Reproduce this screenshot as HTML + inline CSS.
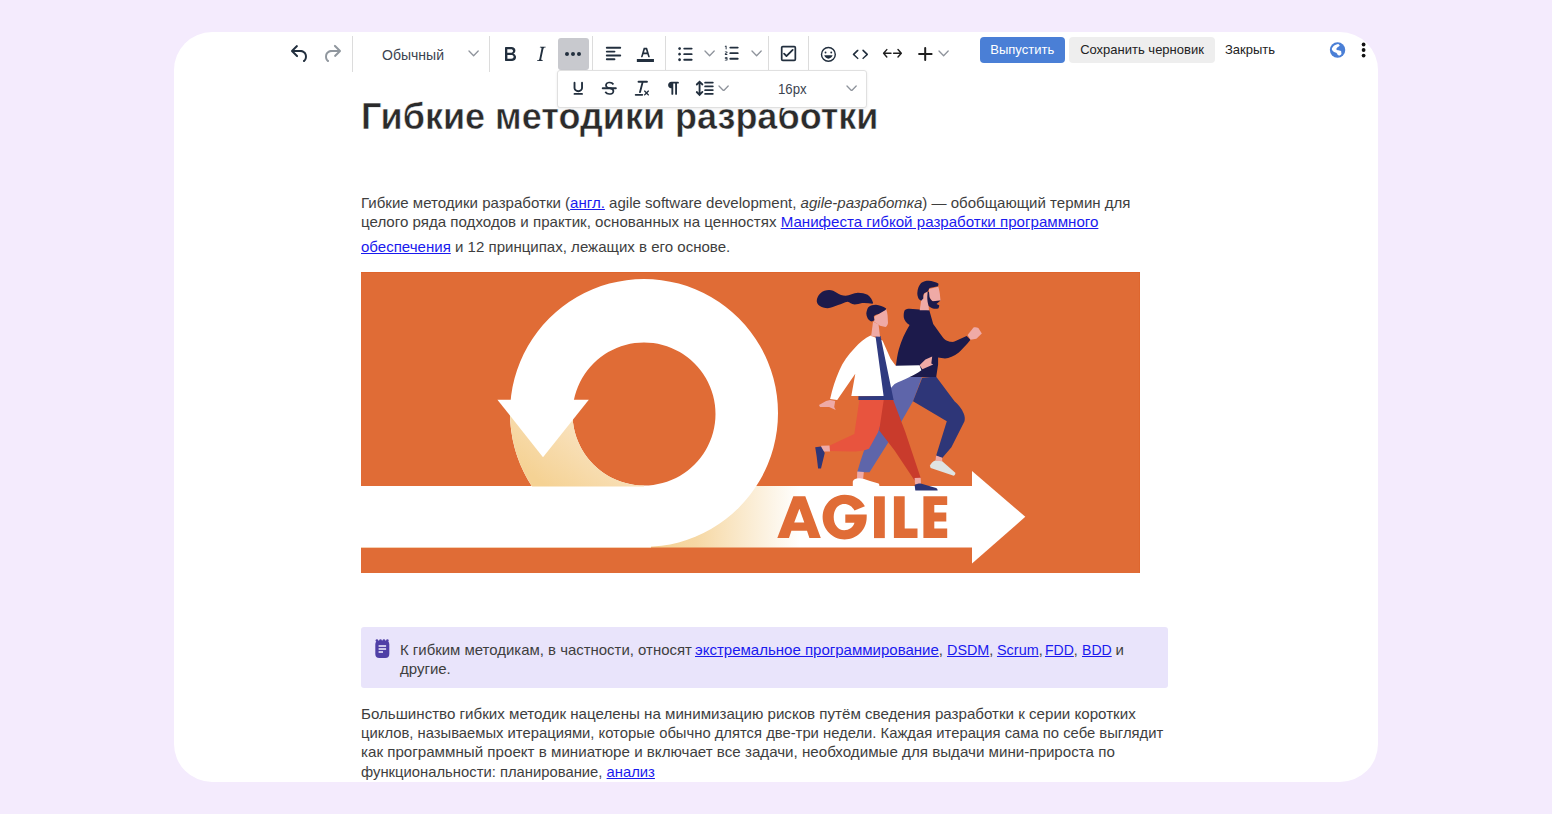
<!DOCTYPE html>
<html><head><meta charset="utf-8"><style>
html,body{margin:0;padding:0;width:1552px;height:814px;overflow:hidden;background:#f4ebfd;font-family:"Liberation Sans",sans-serif}
.card{position:absolute;left:174px;top:32px;width:1204px;height:750px;background:#fff;border-radius:38px;overflow:hidden}
.wrap{position:absolute;left:-174px;top:-32px;width:1552px;height:814px}
.ic{position:absolute;display:block}
.sep{position:absolute;top:36px;width:1px;height:36px;background:#dcdcdc}
.txt{position:absolute;font-size:15px;line-height:20px;white-space:nowrap}
.panel{position:absolute;left:557px;top:70px;width:308px;height:35.5px;background:#fff;border:1px solid #e0e0e0;border-radius:3px;box-shadow:0 1px 3px rgba(0,0,0,.08)}
.btn{position:absolute;top:37px;height:26px;border-radius:4px;font-size:13px;line-height:26px;text-align:center;white-space:nowrap}
.h1{position:absolute;font-size:36px;line-height:40px;font-weight:bold;color:#2b2b2b;white-space:nowrap;-webkit-text-stroke:0.5px #fff}
.ln{position:absolute;transform-origin:0 0;font-size:15px;line-height:20px;color:#3e3e3e;white-space:nowrap}
.ln a{color:#1a1aee;text-decoration:underline}
.note{position:absolute;left:361px;top:627px;width:806.5px;height:61px;background:#e9e4fb;border-radius:3px}
</style></head><body>
<div class="card"><div class="wrap">
<div class="h1" style="left:361px;top:96.7px">Гибкие методики разработки</div><div class="ln" style="left:361px;top:192.8px;transform:scaleX(1.0029)">Гибкие методики разработки (<a>англ.</a> agile software development, <i>agile-разработка</i>) — обобщающий термин для</div><div class="ln" style="left:361px;top:212.4px;transform:scaleX(1.0071)">целого ряда подходов и практик, основанных на ценностях <a>Манифеста гибкой разработки программного</a></div><div class="ln" style="left:361px;top:237.2px;transform:scaleX(1.003)"><a>обеспечения</a> и 12 принципах, лежащих в его основе.</div><svg id="art" style="position:absolute;left:361px;top:271.5px;width:779px;height:301px" viewBox="0 0 779 301"><defs>
<linearGradient id="bandg" gradientUnits="userSpaceOnUse" x1="640" y1="0" x2="800" y2="0">
<stop offset="0" stop-color="#f4cf90"/><stop offset="0.35" stop-color="#f6d8a4"/><stop offset="1" stop-color="#ffffff"/>
</linearGradient>
<linearGradient id="tailg" gradientUnits="userSpaceOnUse" x1="610" y1="400" x2="545" y2="485">
<stop offset="0" stop-color="#fbebd6"/><stop offset="1" stop-color="#f5d294"/>
</linearGradient>
<clipPath id="lowleft"><rect x="400" y="401" width="250" height="85"/></clipPath>
</defs>
<g transform="translate(-361,-271.5)">
<rect x="361" y="271.5" width="779" height="301" fill="#e06c36"/>
<rect x="361" y="271.5" width="779" height="1" fill="#dc5f26" opacity=".6"/><rect x="1139" y="271.5" width="1" height="301" fill="#dc5f26" opacity=".5"/>
<!-- band -->
<rect x="361" y="485.5" width="612" height="61.5" fill="url(#bandg)"/>
<rect x="361" y="485.5" width="290" height="61.5" fill="#fff"/>
<!-- ring white -->
<path fill="#fff" fill-rule="evenodd" d="M644 278.5a134 134 0 1 0 0.01 0Z M644 342a71.5 71.5 0 1 1 -0.01 0Z"/>
<!-- tail cream lower-left of ring -->
<path clip-path="url(#lowleft)" fill="url(#tailg)" fill-rule="evenodd" d="M644 278.5a134 134 0 0 0 -134 134 134 134 0 0 0 134 134 L644 485 a71.5 71.5 0 0 1 -71.5 -71.5 71.5 71.5 0 0 1 71.5 -71.5Z"/>
<!-- left arrowhead -->
<path fill="#fff" d="M497.4 399.2H588.8L543 456.7Z"/>
<!-- right arrowhead -->
<path fill="#fff" d="M972 470.5L1025.3 516.3L972 563Z"/>
<!-- AGILE -->
<g fill="#e06c36">
<path fill-rule="evenodd" d="M777.3 537.6L793.3 495.8H805.3L820.8 537.6H809.4L807 530.3H791.4L789 537.6Z M794.2 522H804.3L799.4 508.3Z"/>
<path d="M866.7 514.1H845.3V522.3H854.5C853 527 849 529.7 844.2 529.7C837.8 529.7 833.7 523.8 833.7 516.5C833.7 509.2 837.8 503.4 844.2 503.4C849 503.4 852.5 506.2 854.5 510L864.9 505.8C861.2 498.8 853.8 494.2 844.6 494.2C832.4 494.2 822.6 504.2 822.6 516.5C822.6 528.9 832.4 538.9 844.6 538.9C856.8 538.9 866.7 529.5 866.7 516.5Z"/>
<rect x="874" y="495.8" width="10.8" height="41.8"/>
<path d="M893.9 495.8H904.7V528.1H917.5V537.6H893.9Z"/>
<path d="M923.4 495.8H947.2V504.6H934.3V512H946.3V521.1H934.3V528.1H947.2V537.6H923.4Z"/>
</g>
<!-- PEOPLE -->
<!-- man back leg (light purple) -->
<path fill="#5e65aa" d="M884 386L886 376L922.2 376L913 400.7L900.7 422.2L869.5 471.8L857.2 471.8L860.2 461.5L864.6 448.2L877.9 429L885 410Z"/>
<!-- man front leg navy -->
<path fill="#2e3678" d="M922.2 377.2L936 376L954.5 400.7C958 404 962 408 963.7 413C965 416 965 418.5 964.5 420.7L951.4 446.8L942.2 457.6L936.1 455.3L946.8 420.7L913 400.7Z"/>
<!-- man back ankle + shoe -->
<path fill="#efaaa6" d="M857.2 471L863.8 471.5L863.1 479.2L857 479.2Z"/>
<path fill="#ffffff" d="M852.8 481C853.5 478.5 856 477.7 859 477.7C862 477.7 866 479 870 480.5L878.6 483C879.5 484 879.5 485.5 879.3 486.6H852.8Z"/>
<!-- man front ankle + shoe -->
<path fill="#efaaa6" d="M936.1 455L942.2 457.3L942.2 460.9L935.5 460Z"/>
<path fill="#dfe4e3" d="M929.9 465.3C931 462.5 933 460.5 935.3 459.9L942.2 460.7L955.3 472.2C955.6 473.5 954.8 474.8 953.7 475.3L930.7 467.6Z"/>
<!-- woman back leg light red -->
<path fill="#e8543e" d="M859.4 399L885.2 399L883.8 414.3L877.9 432L869 448.2C863 450.5 857 451.1 851.3 451.1L829.9 450.4L829.2 445.2L854.3 433.4L857.2 414.3Z"/>
<!-- woman back ankle + shoe -->
<path fill="#efaaa6" d="M821 445.2L829.5 445L830 451L822 451Z"/>
<path fill="#2e3678" d="M815.2 446.7L821 446L824.75 452.6L821 468.1L818.1 468.1L816.6 455.6Z"/>
<!-- woman front leg dark red -->
<path fill="#c93b2c" d="M883.8 399L893 399L905.3 431.5L920.7 477.6L914.6 479.9L894.6 449.9L879.2 430Z"/>
<!-- woman front ankle + shoe -->
<path fill="#efaaa6" d="M914.6 477.6L920.7 477.3L921 483.7L915 483.7Z"/>
<path fill="#2c3575" d="M914.6 484.5C915.5 483.5 918 482.9 920.7 482.9L936.1 487.5C937.2 488 937.6 489 937.6 489.9H915.3Z"/>
<!-- man torso hoodie -->
<path fill="#1c1a4b" d="M904.7 309.8C906 308.5 908 308.3 909.6 308.3L929.3 309.8L933.2 323.6L941.1 334.4C943 337 945 339.5 947 340.3C950 341.5 952 341.6 953.9 341.3L966.6 335.4L970.5 339.3C966 345 962 349 958.8 352C954 355.5 949 357.8 945 358L938.1 357L938.1 363.9L936.2 376.6L909.6 376.6L895.9 365.8C896.5 360 897.5 354 898.8 349.1C901.5 340 905 332 909.6 324.6C906.5 322.5 904 319.5 903.75 316.7C903.6 314 903.8 311.5 904.7 309.8Z"/>
<!-- man fist -->
<path fill="#efaaa6" d="M967.6 334.4L973.5 327C975 326.5 977 326.8 978.4 327.5L981.8 332.9L976.4 338.3L970.5 339.3Z"/>
<!-- man neck -->
<path fill="#efaaa6" d="M924.6 292.4L927.7 291L928.6 305.2L929 309.8L919.7 309.8L921.1 300.3L923.3 295.5Z"/>
<!-- man face -->
<path fill="#efaaa6" d="M929 288.4L938.3 286.2C939.3 289.5 940 293 940.1 296L940.5 299.9L932.1 300.8L929 296Z"/>
<!-- man hair -->
<path fill="#1c1a4b" d="M917.3 292.8C917.5 288.5 919 284.8 921.1 282.6C923.5 280.8 926 280.2 928.6 280.2C932 280.3 936 281.5 938.3 283.1C938.6 284 938.4 285 937.9 285.7L929.5 287.5L927.7 291L924.6 292.4C923.5 293.2 923.2 294.5 923.3 295.5L923.3 298.1L921.1 300.3C919.5 299.5 918.3 298.2 918 296.8C917.5 295.5 917.3 294 917.3 292.8Z"/>
<!-- man beard -->
<path fill="#1c1a4b" d="M927.7 291L929 291.5L929.5 296.8C930.5 298.8 931.5 300.2 933 300.8L940.5 299.9L936.5 303.4L939.2 304.8C939.2 306 938.9 307.2 938.3 307.9C936.8 308.4 935.3 308.4 933.9 308.3C931.5 307.5 929.8 306.5 928.6 305.2C927.5 302 927.2 298.5 927.3 295.9Z"/>
<!-- woman jacket -->
<path fill="#ffffff" d="M870.5 335L882.5 340L890.6 358.2L895.7 365.3L919.5 364.8L921.4 369.7C917 373 913 375 909.6 376.6C904 379.5 899 381.5 894.6 383.4L883.6 395.5L851.3 395.5L855.3 373.3L837.2 399.6L830.1 398.5C832.5 388 835.5 378.5 839.2 370.3C843 361.5 848.5 354 854.3 348.1C859.5 342 865 337.5 870.5 335Z"/>
<!-- woman strap + bag -->
<path fill="#2f3a80" d="M875.5 335.5L880.5 335.5L893.6 399.6L858.4 399.6L858.4 395.8L883.6 395.5Z"/>
<!-- woman hands -->
<path fill="#efaaa6" d="M919.5 364.8L925.4 359L932.2 356L931.3 362.9L933.2 363.9L922.4 368.8Z"/>
<path fill="#efaaa6" d="M830.1 399.6L835.2 400.6L834.2 406.6L835.7 409.6L829.1 406.6L820 406.6L819 404.6L826.1 400.6Z"/>
<!-- woman neck -->
<path fill="#efaaa6" d="M873.1 321L878.6 324L880 336.3L871.1 335.8Z"/>
<!-- woman face -->
<path fill="#efaaa6" d="M878.6 313.6L886.2 308.8C887 311 887.5 313 887.6 315L888 322.5C887.6 324.5 886.8 326 885.5 326.6L880 325.3L873.8 321L874.5 316Z"/>
<!-- woman hair -->
<path fill="#1c1a4b" d="M866.3 312.9C866.6 310.5 867.3 308.3 868.3 306.7C870.5 305 873 304.3 875.9 304.3C879.5 304.5 883 306 886.2 308.1L885.5 309.4L878.6 313.6L875.9 314.3C874.6 314.8 873.8 315.5 873.8 316.3L874.5 319.8L871.8 321.1C869.5 320.2 868.3 319 867.6 317.7C866.8 316 866.3 314.5 866.3 312.9Z"/>
<!-- ponytail -->
<path fill="#1c1a4b" d="M816.75 300.5C816.8 297.5 818.2 294.8 820.2 292.9C822.8 290.5 826 289.5 829.1 289.5C832 289.6 834.5 290.8 836.7 292.25C839.5 294 842.5 295.3 845.6 295.3C849.5 295 853.5 292.6 858 292.25C861.5 292.3 865 293 867.6 294.3C870.5 296.5 872.3 299.5 873.1 302.6L872.5 303.3C869 302.7 865.5 302.4 862.1 302.6C859.5 303.3 857 304 854.6 304C851.5 303.5 849.5 301.8 847.7 301.2C844.5 301.5 841.5 303.5 838.1 304.6C834.5 306 831 307.5 827.75 307.7C824.5 307.7 821.5 306.8 819.5 305.3C817.7 304 816.75 302.3 816.75 300.5Z"/>
</g>
</svg><div class="note"></div><svg class="ic" style="left:370px;top:634px;width:26px;height:28px" viewBox="370 634 26 28"><rect x="375.3" y="640.6" width="14" height="17.5" rx="4" fill="#4f3fa6"/><circle cx="376.9" cy="640.6" r="1.3" fill="#4f3fa6"/><circle cx="380.5" cy="640.6" r="1.3" fill="#4f3fa6"/><circle cx="383.9" cy="640.6" r="1.3" fill="#4f3fa6"/><circle cx="387.4" cy="640.6" r="1.3" fill="#4f3fa6"/><path d="M378.6 645.9H386.1M378.6 649H386.1M378.6 652H383" stroke="#f4f2ff" stroke-width="1.5"/></svg><div class="ln" style="left:400px;top:639.6px;transform:scaleX(0.996)">К гибким методикам, в частности, относят</div><div class="ln" style="left:694.6px;top:639.6px;transform:scaleX(1.001)"><a>экстремальное программирование</a>,</div><div class="ln" style="left:946.6px;top:639.6px;transform:scaleX(0.958)"><a>DSDM</a>,</div><div class="ln" style="left:996.8px;top:639.6px;transform:scaleX(0.962)"><a>Scrum</a>,</div><div class="ln" style="left:1045.4px;top:639.6px;transform:scaleX(0.936)"><a>FDD</a>,</div><div class="ln" style="left:1082.1px;top:639.6px;transform:scaleX(0.938)"><a>BDD</a></div><div class="ln" style="left:1115.6px;top:639.6px">и</div><div class="ln" style="left:400px;top:658.9px;">другие.</div><div class="ln" style="left:361px;top:703.6px;transform:scaleX(1.008)">Большинство гибких методик нацелены на минимизацию рисков путём сведения разработки к серии коротких</div><div class="ln" style="left:361px;top:723.2px;transform:scaleX(0.9864)">циклов, называемых итерациями, которые обычно длятся две-три недели. Каждая итерация сама по себе выглядит</div><div class="ln" style="left:361px;top:742.3px;transform:scaleX(1.0095)">как программный проект в миниатюре и включает все задачи, необходимые для выдачи мини-прироста по</div><div class="ln" style="left:361px;top:761.6px;transform:scaleX(0.987)">функциональности: планирование, <a>анализ</a></div>
<svg class="ic" style="left:288.10px;top:41.85px;width:24.00px;height:24.00px;color:#222f3e;fill:#222f3e" viewBox="0 0 24 24"><path d="M6.4 8H12c3.7 0 6.2 2 6.8 5.1.6 2.7-.4 5.6-2.3 6.8a1 1 0 0 1-1-1.8c1.1-.6 1.8-2.7 1.4-4.6-.5-2.1-2.1-3.5-4.9-3.5H6.4l3.3 3.3a1 1 0 1 1-1.4 1.4l-5-5a1 1 0 0 1 0-1.4l5-5a1 1 0 0 1 1.4 1.4L6.4 8Z"/></svg><svg class="ic" style="left:319.80px;top:41.85px;width:24.00px;height:24.00px;color:rgba(34,47,62,.5);fill:rgba(34,47,62,.5)" viewBox="0 0 24 24"><path d="M17.6 10H12c-2.8 0-4.4 1.4-4.9 3.5-.4 2 .3 4 1.4 4.6a1 1 0 1 1-1 1.8c-2-1.2-2.9-4.1-2.3-6.8.6-3 3-5.1 6.8-5.1h5.6l-3.3-3.3a1 1 0 1 1 1.4-1.4l5 5a1 1 0 0 1 0 1.4l-5 5a1 1 0 0 1-1.4-1.4l3.3-3.3Z"/></svg><div class="sep" style="left:351.5px"></div><div class="txt" style="left:382px;top:44.8px;color:#3b4350;transform-origin:0 0;transform:scaleX(0.935)">Обычный</div><svg class="ic" style="left:467.90px;top:50.40px;width:11.2px;height:6.8px" viewBox="0 0 11.2 6.8"><path d="M1 1L5.6 5.8L10.2 1" fill="none" stroke="#8f949c" stroke-width="1.3" stroke-linecap="round" stroke-linejoin="round"/></svg><div class="sep" style="left:488.5px"></div><svg class="ic" style="left:497.60px;top:41.85px;width:24.00px;height:24.00px;color:#222f3e;fill:#222f3e" viewBox="0 0 24 24"><path fill-rule="evenodd" d="M7.8 19c-.3 0-.5 0-.6-.2l-.2-.5V5.7c0-.2 0-.4.2-.5l.6-.2h5c1.5 0 2.7.3 3.5 1 .7.6 1.1 1.4 1.1 2.5a3 3 0 0 1-.6 1.9c-.4.6-1 1-1.6 1.2.4.1.9.3 1.3.6s.8.7 1 1.2c.4.4.5 1 .5 1.6 0 1.3-.4 2.3-1.3 3-.8.7-2.100 1-3.8 1H7.8Zm5-8.3c.6 0 1.2-.1 1.6-.5.4-.3.6-.7.6-1.3 0-1.1-.8-1.7-2.3-1.7H9.3v3.5h3.4Zm.5 6c.7 0 1.3-.1 1.700-.4.4-.4.6-.9.6-1.5s-.2-1-.7-1.4c-.4-.3-1-.4-2-.4H9.4v3.8h4Z"/></svg><svg class="ic" style="left:529.35px;top:41.85px;width:24.00px;height:24.00px;color:#222f3e;fill:#222f3e" viewBox="0 0 24 24"><path fill-rule="evenodd" d="m16.7 4.7-.1.9h-.3c-.6 0-1 0-1.4.3-.3.3-.4.6-.5 1.1l-2.1 9.8v.6c0 .5.4.8 1.4.8h.2l-.2.8H8l.2-.8h.2c1.1 0 1.8-.5 2-1.5l2-9.8.1-.5c0-.6-.4-.8-1.4-.8h-.3l.2-.9h5.8Z"/></svg><div style="position:absolute;left:558px;top:38px;width:31px;height:31.5px;background:#c8c9ce;border-radius:3px"></div><svg class="ic" style="left:561.35px;top:41.90px;width:24.00px;height:24.00px;color:#222f3e;fill:#222f3e" viewBox="0 0 24 24"><path d="M6 10a2 2 0 0 0-2 2c0 1.1.9 2 2 2a2 2 0 0 0 2-2 2 2 0 0 0-2-2Zm12 0a2 2 0 0 0-2 2c0 1.1.9 2 2 2a2 2 0 0 0 2-2 2 2 0 0 0-2-2Zm-6 0a2 2 0 0 0-2 2c0 1.1.9 2 2 2a2 2 0 0 0 2-2 2 2 0 0 0-2-2Z"/></svg><div class="sep" style="left:592px"></div><svg class="ic" style="left:601.58px;top:42.48px;width:23.04px;height:23.04px;color:#222f3e;fill:#222f3e" viewBox="0 0 24 24"><path fill-rule="evenodd" d="M5 5h14c.6 0 1 .4 1 1s-.4 1-1 1H5a1 1 0 1 1 0-2Zm0 4h8c.6 0 1 .4 1 1s-.4 1-1 1H5a1 1 0 1 1 0-2Zm0 8h8c.6 0 1 .4 1 1s-.4 1-1 1H5a1 1 0 0 1 0-2Zm0-4h14c.6 0 1 .4 1 1s-.4 1-1 1H5a1 1 0 0 1 0-2Z"/></svg><svg class="ic" style="left:634.10px;top:42.17px;width:22.80px;height:22.80px;color:#222f3e;fill:#222f3e" viewBox="0 0 24 24"><g fill-rule="evenodd"><path d="M3 18h18v3H3z"/><path d="M8.7 16h-.8a.5.5 0 0 1-.5-.6l2.7-9c.1-.3.3-.4.5-.4h2.800c.2 0 .4.1.5.4l2.7 9a.5.5 0 0 1-.5.6h-.8a.5.5 0 0 1-.4-.4l-.7-2.2c0-.3-.3-.4-.5-.4h-3.4c-.2 0-.4.1-.5.4l-.7 2.2c0 .3-.2.4-.4.4Zm2.6-7.6-.6 2a.5.5 0 0 0 .5.6h1.6a.5.5 0 0 0 .5-.6l-.6-2c0-.3-.3-.4-.5-.4h-.4c-.2 0-.4.1-.5.4Z"/></g></svg><div class="sep" style="left:665px"></div><svg class="ic" style="left:674.46px;top:42.59px;width:22.32px;height:22.32px;color:#222f3e;fill:#222f3e" viewBox="0 0 24 24"><path fill-rule="evenodd" d="M11 5h8c.6 0 1 .4 1 1s-.4 1-1 1h-8a1 1 0 0 1 0-2Zm0 6h8c.6 0 1 .4 1 1s-.4 1-1 1h-8a1 1 0 0 1 0-2Zm0 6h8c.6 0 1 .4 1 1s-.4 1-1 1h-8a1 1 0 0 1 0-2ZM4.5 6c0-.4.1-.8.4-1 .3-.4.7-.5 1.1-.5.4 0 .8.1 1 .4.4.3.5.7.5 1.1 0 .4-.1.8-.4 1-.3.4-.7.5-1.1.5-.4 0-.8-.1-1-.4-.4-.3-.5-.7-.5-1.1Zm0 6c0-.4.1-.8.4-1 .3-.4.7-.5 1.1-.5.4 0 .8.1 1 .4.4.3.5.7.5 1.1 0 .4-.1.8-.4 1-.3.4-.7.5-1.1.5-.4 0-.8-.1-1-.4-.4-.3-.5-.7-.5-1.1Zm0 6c0-.4.1-.8.4-1 .3-.4.7-.5 1.1-.5.4 0 .8.1 1 .4.4.3.5.7.5 1.1 0 .4-.1.8-.4 1-.3.4-.7.5-1.1.5-.4 0-.8-.1-1-.4-.4-.3-.5-.7-.5-1.1Z"/></svg><svg class="ic" style="left:703.60px;top:50.10px;width:11.2px;height:6.8px" viewBox="0 0 11.2 6.8"><path d="M1 1L5.6 5.8L10.2 1" fill="none" stroke="#8f949c" stroke-width="1.3" stroke-linecap="round" stroke-linejoin="round"/></svg><svg class="ic" style="left:721.30px;top:42.34px;width:22.32px;height:22.32px;color:#222f3e;fill:#222f3e" viewBox="0 0 24 24"><path fill-rule="evenodd" d="M10 17h8c.6 0 1 .4 1 1s-.4 1-1 1h-8a1 1 0 0 1 0-2Zm0-6h8c.6 0 1 .4 1 1s-.4 1-1 1h-8a1 1 0 0 1 0-2Zm0-6h8c.6 0 1 .4 1 1s-.4 1-1 1h-8a1 1 0 1 1 0-2ZM6 4v3.5c0 .3-.2.5-.5.5a.5.5 0 0 1-.5-.5V5h-.5a.5.5 0 0 1 0-1H6Zm-1 8.8.2.2h1.3c.3 0 .5.2.5.5s-.2.5-.5.5H4.9a1 1 0 0 1-.9-1V13c0-.4.3-.8.6-1l1.2-.4.2-.3a.2.2 0 0 0-.2-.2H4.5a.5.5 0 0 1-.5-.5c0-.3.2-.5.5-.5h1.6c.5 0 .9.4.9 1v.1c0 .4-.3.8-.6 1l-1.2.4-.2.3ZM7 17v2c0 .6-.4 1-1 1H4.5a.5.5 0 0 1 0-1h1.2c.2 0 .3-.1.3-.3 0-.2-.1-.3-.3-.3H4.4a.4.4 0 1 1 0-.8h1.3c.2 0 .3-.1.3-.3 0-.2-.1-.3-.3-.3H4.5a.5.5 0 1 1 0-1H6c.6 0 1 .4 1 1Z"/></svg><svg class="ic" style="left:750.60px;top:50.10px;width:11.2px;height:6.8px" viewBox="0 0 11.2 6.8"><path d="M1 1L5.6 5.8L10.2 1" fill="none" stroke="#8f949c" stroke-width="1.3" stroke-linecap="round" stroke-linejoin="round"/></svg><div class="sep" style="left:767.5px"></div><svg class="ic" style="left:776.73px;top:41.83px;width:23.04px;height:23.04px;color:#222f3e;fill:#222f3e" viewBox="0 0 24 24"><path fill-rule="evenodd" d="M6 4h12a2 2 0 0 1 2 2v12a2 2 0 0 1-2 2H6a2 2 0 0 1-2-2V6c0-1.1.9-2 2-2Zm0 1.8a.2.2 0 0 0-.2.2v12c0 .1.1.2.2.2h12c.1 0 .2-.1.2-.2V6a.2.2 0 0 0-.2-.2H6Z"/><path d="M9.9 13.3 15.7 7.5a.9.9 0 0 1 1.3 1.3l-6.5 6.5a.9.9 0 0 1-1.3 0l-2.5-2.5a.9.9 0 0 1 1.3-1.300Z"/></svg><div class="sep" style="left:808px"></div><svg class="ic" style="left:816.80px;top:42.80px;width:22.80px;height:22.80px;color:#222f3e;fill:#222f3e" viewBox="0 0 24 24"><path d="M9 11c.6 0 1-.4 1-1s-.4-1-1-1a1 1 0 0 0-1 1c0 .6.4 1 1 1Zm6 0c.6 0 1-.4 1-1s-.4-1-1-1a1 1 0 0 0-1 1c0 .6.4 1 1 1Zm-3 5.5c2.1 0 4-1.5 4.4-3.5H7.6c.5 2 2.3 3.5 4.4 3.5ZM12 4a8 8 0 1 0 0 16 8 8 0 0 0 0-16Zm0 14.5a6.5 6.5 0 1 1 0-13 6.5 6.5 0 0 1 0 13Z"/></svg><svg class="ic" style="left:848.90px;top:42.95px;width:22.80px;height:22.80px;color:#222f3e;fill:#222f3e" viewBox="0 0 24 24"><path d="M9.8 15.7c.3.3.3.8 0 1-.3.4-.9.4-1.2 0l-4.4-4.1a.8.8 0 0 1 0-1.2l4.4-4.2c.3-.3.9-.3 1.2 0 .3.3.3.8 0 1.1L6 12l3.8 3.700ZM14.2 15.7c-.3.3-.3.8 0 1 .4.4.9.4 1.2 0l4.4-4.1c.3-.3.3-.9 0-1.2l-4.4-4.2a.8.8 0 0 0-1.2 0c-.3.3-.3.8 0 1.100L18 12l-3.8 3.7Z"/></svg><svg class="ic" style="left:880px;top:46px;width:24px;height:14px" viewBox="880 46 24 14"><path d="M883.8 53.3H891M886.8 49.6L883.6 53.3L886.8 56.9M893.6 53.3H901.1M898 49.6L901.3 53.3L898 56.9" fill="none" stroke="#1f1f1f" stroke-width="1.45" stroke-linecap="round" stroke-linejoin="round"/></svg><svg class="ic" style="left:916px;top:45px;width:20px;height:18px" viewBox="916 45 20 18"><path d="M925.2 47.9V60M919.1 53.9H931.6" fill="none" stroke="#1f1f1f" stroke-width="2" stroke-linecap="round"/></svg><svg class="ic" style="left:938.45px;top:50.20px;width:11.2px;height:6.8px" viewBox="0 0 11.2 6.8"><path d="M1 1L5.6 5.8L10.2 1" fill="none" stroke="#8f949c" stroke-width="1.3" stroke-linecap="round" stroke-linejoin="round"/></svg><div class="panel"></div><svg class="ic" style="left:566.87px;top:77.12px;width:22.56px;height:22.56px;color:#222f3e;fill:#222f3e" viewBox="0 0 24 24"><path fill-rule="evenodd" d="M16 5c.6 0 1 .4 1 1v5.5a4 4 0 0 1-.4 1.8l-1 1.4a5.3 5.3 0 0 1-5.5 1 5 5 0 0 1-1.6-1c-.5-.4-.8-.9-1.1-1.4a4 4 0 0 1-.4-1.8V6c0-.6.4-1 1-1s1 .4 1 1v5.500c0 .3 0 .6.2 1l.6.7a3.3 3.3 0 0 0 2.2.8 3.4 3.4 0 0 0 2.2-.8c.3-.2.4-.5.6-.8l.2-.9V6c0-.6.4-1 1-1ZM8 17h8c.6 0 1 .4 1 1s-.4 1-1 1H8a1 1 0 0 1 0-2Z"/></svg><svg class="ic" style="left:598.22px;top:77.17px;width:22.56px;height:22.56px;color:#222f3e;fill:#222f3e" viewBox="0 0 24 24"><g fill-rule="evenodd"><path d="M15.6 8.5c-.5-.7-1-1.1-1.3-1.3-.6-.4-1.3-.6-2-.6-2.7 0-2.800 1.7-2.8 2.1 0 1.6 1.8 2 3.2 2.3 4.4.9 4.6 2.8 4.6 3.9 0 1.4-.7 4.1-5 4.1A6.2 6.2 0 0 1 7 16.4l1.5-1.1c.4.6 1.6 2 3.7 2 1.6 0 2.5-.4 3-1.2.4-.8.3-2-.8-2.6-.7-.4-1.6-.7-2.9-1-1-.2-3.9-.8-3.9-3.6C7.6 6 10.3 5 12.4 5c2.9 0 4.2 1.6 4.7 2.4l-1.5 1.1Z"/><path d="M5 11h14a1 1 0 0 1 0 2H5a1 1 0 0 1 0-2Z"/></g></svg><svg class="ic" style="left:630.65px;top:76.97px;width:22.56px;height:22.56px;color:#222f3e;fill:#222f3e" viewBox="0 0 24 24"><path fill-rule="evenodd" d="M13.2 6a1 1 0 0 1 0 .2l-2.6 10a1 1 0 0 1-1 .8h-.2a.8.8 0 0 1-.8-1l2.6-10H8a1 1 0 1 1 0-2h9a1 1 0 0 1 0 2h-3.8ZM5 18h7a1 1 0 0 1 0 2H5a1 1 0 0 1 0-2Zm13 1.5L16.5 18 15 19.5a.7.7 0 0 1-1-1l1.5-1.5-1.5-1.5a.7.7 0 0 1 1-1l1.5 1.5 1.5-1.5a.7.7 0 0 1 1 1L17.5 17l1.5 1.5a.7.7 0 0 1-1 1Z"/></svg><svg class="ic" style="left:662.44px;top:77.12px;width:22.56px;height:22.56px;color:#222f3e;fill:#222f3e" viewBox="0 0 24 24"><path fill-rule="evenodd" d="M10 5h7a1 1 0 0 1 0 2h-1v11a1 1 0 0 1-2 0V7h-2v11a1 1 0 0 1-2 0v-6c-.5 0-1 0-1.4-.3A3.4 3.4 0 0 1 6.8 10a3.3 3.3 0 0 1 0-2.800 3.4 3.4 0 0 1 1.8-1.8L10 5Z"/></svg><svg class="ic" style="left:693.20px;top:77.07px;width:22.56px;height:22.56px;color:#222f3e;fill:#222f3e" viewBox="0 0 24 24"><path d="M21 5a1 1 0 0 1 .1 2H13a1 1 0 0 1-.1-2H21zm0 4a1 1 0 0 1 .1 2H13a1 1 0 0 1-.1-2H21zm0 4a1 1 0 0 1 .1 2H13a1 1 0 0 1-.1-2H21zm0 4a1 1 0 0 1 .1 2H13a1 1 0 0 1-.1-2H21zM7 3.6l3.7 3.7a1 1 0 0 1-1.3 1.5h-.1L8 7.3v9.2l1.3-1.3a1 1 0 0 1 1.3 0h.1c.4.4.4 1 0 1.3v.1L7 20.4l-3.700-3.7a1 1 0 0 1 1.3-1.5h.1L6 16.7V7.4L4.7 8.7a1 1 0 0 1-1.3 0h-.1a1 1 0 0 1 0-1.3v-.1L7 3.6z"/></svg><svg class="ic" style="left:718.05px;top:84.50px;width:11.2px;height:6.8px" viewBox="0 0 11.2 6.8"><path d="M1 1L5.6 5.8L10.2 1" fill="none" stroke="#8f949c" stroke-width="1.3" stroke-linecap="round" stroke-linejoin="round"/></svg><div class="txt" style="left:778px;top:79.4px;color:#3b4350;transform-origin:0 0;transform:scaleX(0.88)">16px</div><svg class="ic" style="left:846.15px;top:84.50px;width:11.2px;height:6.8px" viewBox="0 0 11.2 6.8"><path d="M1 1L5.6 5.8L10.2 1" fill="none" stroke="#8f949c" stroke-width="1.3" stroke-linecap="round" stroke-linejoin="round"/></svg><div class="btn" style="left:979.5px;width:85.5px;background:#4a7fd6;color:#fff">Выпустить</div><div class="btn" style="left:1069px;width:146px;background:#eeeeee;color:#222">Сохранить черновик</div><div class="btn" style="left:1215px;width:70px;background:transparent;color:#222">Закрыть</div><svg class="ic" style="left:1325px;top:38px;width:25px;height:24px" viewBox="1325 38 25 24"><circle cx="1337.55" cy="49.95" r="7.7" fill="#4a7fd6"/><path d="M1338.3 43.9C1336.8 44.1 1334.9 44.7 1333.6 46C1332.4 47.2 1331.9 48.4 1331.8 49.2C1332.4 50.6 1333.2 51.4 1334.1 51.9C1334.9 52.3 1335.8 52.5 1336.2 52.75C1337 53.3 1337.5 54.3 1337.7 55.1C1338.4 55.6 1339.2 55.5 1339.75 55.4C1340.6 55.1 1341.2 54.5 1341.5 53.9C1341.3 53 1341.3 51.8 1341.1 51C1340.6 50.6 1339.9 50.4 1339.2 50.4C1338.3 50.2 1337.2 50.3 1336.5 49.8C1336.3 49.1 1336.4 48.4 1336.8 48C1337.3 47.5 1337.9 47.3 1338.3 46.85C1338.9 46.2 1339.4 45.8 1339.75 45.4C1339.4 44.8 1338.9 44.2 1338.3 43.9Z" fill="#fff"/></svg><svg class="ic" style="left:1360px;top:42px;width:7px;height:16px" viewBox="1360 42 7 16"><circle cx="1363.6" cy="44.5" r="1.9" fill="#111"/><circle cx="1363.6" cy="50" r="1.9" fill="#111"/><circle cx="1363.6" cy="55.6" r="1.9" fill="#111"/></svg>
</div></div>
</body></html>
